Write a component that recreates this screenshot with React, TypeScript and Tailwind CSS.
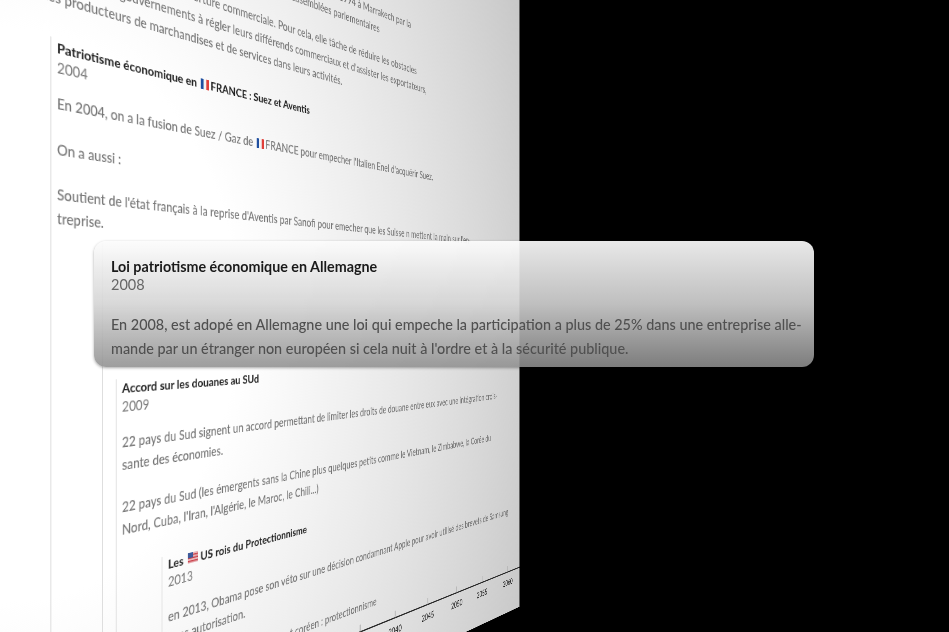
const font = { fontFamily: "Lato, 'Noto Sans', sans-serif" };

function Line({ children, className = "" }: { children: React.ReactNode; className?: string }) {
  return <p className={`h-6 whitespace-nowrap text-[14.4px] font-medium leading-6 text-[#757575] ${className}`}>{children}</p>;
}

function Title({ children }: { children: React.ReactNode }) {
  return <p className="h-5 whitespace-nowrap text-[14px] font-bold leading-5 text-[#222]">{children}</p>;
}

function Year({ children }: { children: React.ReactNode }) {
  return <p className="h-5 text-[14.5px] leading-5 text-[#777]">{children}</p>;
}

function FranceFlag() {
  return (
    <svg className="mx-[2px] inline-block align-[-1px]" width="12" height="12" viewBox="0 0 12 12">
      <rect x="0" y="0" width="4" height="12" fill="#1f4fa0" />
      <rect x="4" y="0" width="4" height="12" fill="#f4f4f4" />
      <rect x="8" y="0" width="4" height="12" fill="#e0403a" />
    </svg>
  );
}

function UsFlag() {
  return (
    <svg className="mx-[3px] inline-block align-[0px]" width="14" height="12" viewBox="0 0 14 12">
      <rect width="14" height="12" fill="#e9b7bb" />
      <rect y="2" width="14" height="1.5" fill="#c9404a" />
      <rect y="5.5" width="14" height="1.5" fill="#c9404a" />
      <rect y="9" width="14" height="1.5" fill="#c9404a" />
      <rect width="7" height="6" fill="#3f5a9a" />
    </svg>
  );
}

function Chart() {
  const ticks = [
    { x: 315, label: "2035" },
    { x: 390, label: "2040" },
    { x: 467, label: "2045" },
    { x: 541, label: "2050" },
    { x: 611, label: "2055" },
    { x: 688, label: "2060" },
  ];
  return (
    <svg className="mt-3 shrink-0" width="726" height="40" viewBox="0 0 726 40">
      <line x1="0" y1="10" x2="726" y2="10" stroke="#2a2a2a" strokeWidth="2" />
      {ticks.map((t) => (
        <g key={t.label}>
          <line x1={t.x} y1="0" x2={t.x} y2="10" stroke="#888" strokeWidth="1.2" />
          <text x={t.x} y="33" textAnchor="middle" fontSize="13" fontWeight="500" fill="#222">
            {t.label}
          </text>
        </g>
      ))}
    </svg>
  );
}

export default function App() {
  return (
    <div className="relative h-[632px] w-[949px] overflow-hidden bg-black" style={font}>
      {/* sheet seen in perspective, vanishing point around (1142, 315) */}
      <div className="absolute left-[-43px] top-[-300px] flex h-[1124px] w-[957px] origin-[100px_615px] flex-col overflow-hidden bg-[radial-gradient(ellipse_1150px_1400px_at_100px_615px,#ffffff_20%,#bababa_100%)] pt-[172px] blur-[0.5px] [transform:perspective(388px)_rotateY(19.7deg)]">
        <div className="ml-[87px]">
          <Line>L'Organisation mondiale a été créée par les accords signés en avril 1994 à Marrakech par la</Line>
          <Line>réunion de 124 pays, puis ratifiée par les États et les assemblées parlementaires</Line>
          <Line className="mt-[18px]">Elle veut favoriser ainsi l'ouverture commerciale. Pour cela, elle tâche de réduire les obstacles</Line>
          <Line>et d'aider les gouvernements à régler leurs différends commerciaux et d'assister les exportateurs,</Line>
          <Line>les producteurs de marchandises et de services dans leurs activités.</Line>
        </div>

        <div className="ml-[93px] mt-[28px] flex flex-1 flex-col border-l border-[#dcdcdc] pl-[6px]">
          <Title>
            Patriotisme économique en <FranceFlag />FRANCE : Suez et Aventis
          </Title>
          <Year>2004</Year>
          <Line className="mt-[14px]">
            En 2004, on a la fusion de Suez / Gaz de <FranceFlag />FRANCE pour empecher l'Italien Enel d'acquérir Suez.
          </Line>
          <Line className="mt-[22px]">On a aussi :</Line>
          <Line className="mt-[21px]">Soutient de l'état français à la reprise d'Aventis par Sanofi pour emecher que les Suisse n mettent la main sur l'en-</Line>
          <Line>treprise.</Line>

          <div className="ml-[50px] mt-[9px] flex flex-1 flex-col border-l border-[#dcdcdc] pl-[15px] pt-[143px]">
            <div className="flex flex-1 flex-col border-l border-[#dcdcdc] pl-[6.5px]">
              <Title>Accord sur les douanes au SUd</Title>
              <Year>2009</Year>
              <Line className="mt-4">22 pays du Sud signent un accord permettant de limiter les droits de douane entre eux avec une intégration crois-</Line>
              <Line>sante des économies.</Line>
              <Line className="mt-[21px]">22 pays du Sud (les émergents sans la Chine plus quelques petits comme le Vietnam, le Zimbabwe, la Corée du</Line>
              <Line>Nord, Cuba, l'Iran, l'Algérie, le Maroc, le Chili...)</Line>

              <div className="ml-[49.5px] mt-[27px] flex flex-1 flex-col border-l border-[#dcdcdc] pl-[7.5px]">
                <Title>
                  Les <UsFlag />US rois du Protectionnisme
                </Title>
                <Year>2013</Year>
                <Line className="mt-[17px]">en 2013, Obama pose son véto sur une décision condamnant Apple pour avoir utilisé des brevets de Samsung</Line>
                <Line>sans autorisation.</Line>
                <Line className="mt-[21px]">Apple l'emporte face au géant coréen : protectionnisme</Line>
                <Chart />
              </div>
            </div>
          </div>
        </div>
      </div>

      {/* card lying over the sheet */}
      <div className="absolute left-[94px] top-[241px] h-[126px] w-[720px] rounded-xl bg-gradient-to-b from-[rgba(252,252,252,0.92)] via-[rgba(212,212,212,0.9)] to-[rgba(143,143,143,0.875)] px-[17px] pt-4 shadow-[0_1px_3px_rgba(0,0,0,0.35)]">
        <p className="text-[14.3px] font-bold leading-5 text-[#1a1a1a]">Loi patriotisme économique en Allemagne</p>
        <p className="text-[14.5px] leading-[16px] text-[#666]">2008</p>
        <p className="mt-5 whitespace-nowrap text-[14.4px] font-medium leading-6 text-[#505050]">
          En 2008, est adopé en Allemagne une loi qui empeche la participation a plus de 25% dans une entreprise alle-
        </p>
        <p className="whitespace-nowrap text-[14.4px] font-medium leading-6 text-[#505050]">
          mande par un étranger non européen si cela nuit à l'ordre et à la sécurité publique.
        </p>
      </div>
    </div>
  );
}
